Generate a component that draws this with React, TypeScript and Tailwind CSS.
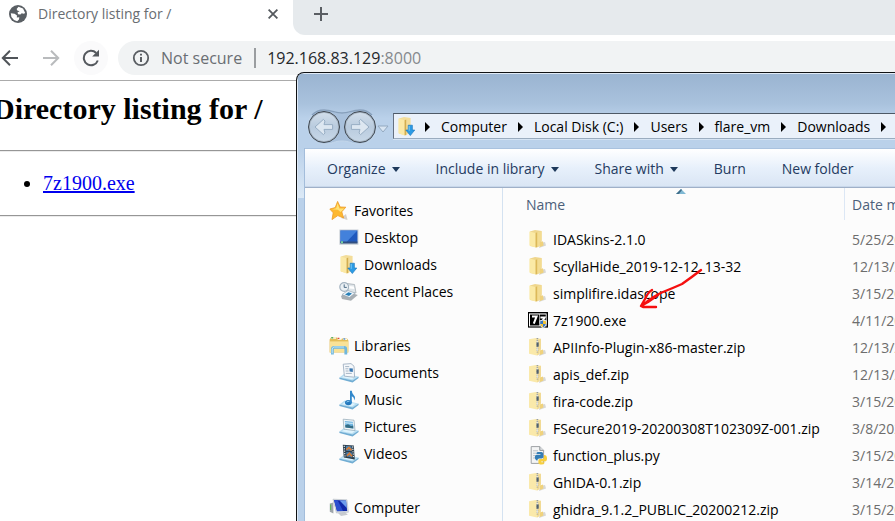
import React from "react";

type IconProps = { className?: string };

function Globe() {
  return (
    <svg viewBox="0 0 18 18" className="size-[18px] shrink-0" aria-hidden="true">
      <circle cx="9" cy="9" r="9" fill="#5a5f64" />
      <path d="M9.5 1.8 14 3.6 16.2 8 14.8 8.8 12.7 8.2 11.4 9.6 9 9.2 8.6 7.2 10.6 6.2 8.3 5.6 7.6 4Z" fill="#fff" />
      <path d="M1.8 8.2 5.6 8.8 8 10.4 7.8 12.4 10.3 12.2 10 14.4 8.2 16.2 5 15 2.4 12Z" fill="#fff" />
    </svg>
  );
}

function ArrowLeft({ className }: IconProps) {
  return (
    <svg viewBox="0 0 18 18" className={className} fill="none" stroke="currentColor" strokeWidth="2" aria-hidden="true">
      <path d="M17 9H2M9 1.8 1.8 9 9 16.2" />
    </svg>
  );
}

function Reload() {
  return (
    <svg viewBox="0 0 18 18" className="size-[18px]" fill="none" aria-hidden="true">
      <path d="M14.2 4A7.2 7.2 0 1 0 15.8 11.5" stroke="#55595e" strokeWidth="2" />
      <path d="M17 .8V7.6H10.2Z" fill="#55595e" />
    </svg>
  );
}

function Info() {
  return (
    <svg viewBox="0 0 18 18" className="size-[18px] shrink-0" fill="none" aria-hidden="true">
      <circle cx="9" cy="9" r="7.2" stroke="#5a5e63" strokeWidth="1.8" />
      <path d="M9 8v5M9 4.8v1.8" stroke="#5a5e63" strokeWidth="2" />
    </svg>
  );
}

function Folder() {
  return (
    <svg viewBox="0 0 20 20" className="size-5 shrink-0" aria-hidden="true">
      <path d="M11 18 18 15.5 17 12 12 13Z" fill="#c9c9c4" opacity=".7" />
      <path d="M2 1.4 7 0 13.6 1V14.6L9 17.6 2 16Z" fill="#efd68d" />
      <path d="M1.4 1.4 7.6 3V17.6L1.4 15.6Z" fill="#fbeaa6" />
      <path d="M7.6 3 9.4 2.2V17L7.6 17.6Z" fill="#dcb959" />
      <path d="M9.4 2.2 13.6 1.2V10.6L11.6 12V16.2L9.4 17Z" fill="#f3dc92" />
      <path d="M12 12.2 15 11.2 15.6 15.4 12 17Z" fill="#f0d27c" />
    </svg>
  );
}

function ZipFolder() {
  return (
    <svg viewBox="0 0 20 20" className="size-5 shrink-0" aria-hidden="true">
      <path d="M11 18 18 15.5 17 12 12 13Z" fill="#c9c9c4" opacity=".7" />
      <path d="M1 1.2 8 0 13 .8V14.6L9 17.4 1 15.8Z" fill="#fae9aa" />
      <path d="M10.4 1.4 13 .8V11.2L11.4 12.6V16.2L9 17.4Z" fill="#f1da95" />
      <path d="M12 12.4 15 11.4 15.4 15.6 12 17Z" fill="#f0d27c" />
      <path d="M9.4 0V14.4" stroke="#989da1" strokeWidth="1.6" strokeDasharray="1.2 .8" />
      <path d="M9.6 4.4V8.6" stroke="#50606f" strokeWidth="2.2" />
      <path d="M9.2 2.8V4.4M9.2 9.6V13" stroke="#e8eef3" strokeWidth="1" />
    </svg>
  );
}

function DownloadsFolder() {
  return (
    <svg viewBox="0 0 20 20" className="size-5 shrink-0" aria-hidden="true">
      <path d="M2 1.6 7 0 13.6 1V14.4L9 18.4 2 16.4Z" fill="#f3dd9a" />
      <path d="M1.4 1.4 7.6 3.2V18.6L1.4 16.2Z" fill="#fbe9a6" />
      <path d="M7.6 3.2 9.2 2.4V17.8L7.6 18.6Z" fill="#d3ae50" />
      <path d="M11.2 8.2h4.2v4.8h2.4L13.3 18.6 8.8 13h2.4Z" fill="#2c9be5" stroke="#1673bb" strokeWidth=".6" />
      <path d="M12.2 9V13.8" stroke="#7accf8" strokeWidth="1" />
    </svg>
  );
}

function Star() {
  return (
    <svg viewBox="0 0 20 20" className="size-5 shrink-0" aria-hidden="true">
      <path d="M12 17 18.6 19 17 13Z" fill="#d6d0c8" />
      <path d="M8.6.4 11.2 6 16.8 6.2 12.8 10.8 14.6 17 8.8 14.6 3 18.6 4.2 11.8.8 8 6.2 6.6Z" fill="#fdb830" stroke="#ee9c28" strokeWidth=".8" />
      <path d="M8.6 2.2 10.4 7.4 15.4 7.4 11.6 11 8.8 8.8 3 8.2 7.2 7.2Z" fill="#ffe377" />
    </svg>
  );
}

function Desktop() {
  return (
    <svg viewBox="0 0 20 20" className="size-5 shrink-0" aria-hidden="true">
      <path d="M.4 1.4h19v15.4H.4Z" fill="#c5ccd3" />
      <path d="M1.4 2.4h17v12.4h-17Z" fill="#2059bd" />
      <path d="M1.4 2.4h17L7 14.6H1.4Z" fill="#4f8fe5" opacity=".75" />
      <path d="M1.4 13.4h17v2h-17Z" fill="#304e80" />
      <path d="M2 13.2h2v2H2Z" fill="#75d49c" />
    </svg>
  );
}

function RecentPlaces() {
  return (
    <svg viewBox="0 0 20 20" className="size-5 shrink-0" aria-hidden="true">
      <path d="M8 1.5 15.5 2.5 17 11 9 10Z" fill="#dfe5e9" stroke="#a4adb4" strokeWidth=".8" />
      <path d="M9.5 4 14.8 4.6 15.4 7 10.4 6.5Z" fill="#fff" />
      <path d="M2 14 8 9.5 18.8 13 12 18.8 3 17Z" fill="#a8aeb3" />
      <path d="M3 12.5 9 8.5 16 11 10.5 15.5Z" fill="#eef5fa" stroke="#8fa1b0" strokeWidth=".6" />
      <path d="M6 12.5 9.5 10.2 13 11.5 10 14Z" fill="#277fb7" />
      <circle cx="5.2" cy="5" r="4.4" fill="#eaf0f4" stroke="#a3b3c0" strokeWidth="1.2" />
      <path d="M5.2 2.4v3h2.6" stroke="#4b6a85" fill="none" />
    </svg>
  );
}

function Libraries() {
  return (
    <svg viewBox="0 0 20 20" className="size-5 shrink-0" aria-hidden="true">
      <path d="M.6 3.4 2 1.6h6l1 1.6h3l1-.8h5l1.4 2V16.6H.6Z" fill="#e4bd57" />
      <path d="M1 5.4H19.2V16H1Z" fill="#f9e297" />
      <path d="M2 2.2h5M8.6 3.2h4M14 3.4h4" stroke="#fffce9" strokeWidth="1.2" />
      <path d="M2.2 1.8h2" stroke="#42a650" strokeWidth="1.3" />
      <path d="M8.6 2.4h1.8" stroke="#e04632" strokeWidth="1.3" />
      <path d="M14.4 3h1.8" stroke="#3c82d5" strokeWidth="1.3" />
      <path d="M3.4 18.4V13.2Q3.4 11.4 5.2 11.4H15Q16.8 11.4 16.8 13.2V18.4" fill="none" stroke="#70b7dd" strokeWidth="2.8" />
      <path d="M3.2 17.4V13Q3.6 11.2 5.2 11H15" fill="none" stroke="#c3e7f7" strokeWidth="1" />
    </svg>
  );
}

function Tray() {
  return (
    <>
      <path d="M.4 14.4 5.6 10.6 19.4 13.4 13.6 18Z" fill="#b8def2" />
      <path d="M.4 14.4 13.6 17.4 19.6 13.4V15L13.6 19.4.4 16Z" fill="#71add3" />
      <path d="M3 14.3 6.4 12 16.4 13.8 13 16.2Z" fill="#e0f4fd" />
    </>
  );
}

function Documents() {
  return (
    <svg viewBox="0 0 20 20" className="size-5 shrink-0" aria-hidden="true">
      <Tray />
      <path d="M4.2 1.2 12 .6 15 3.2 15.6 14.2 5.4 13.2Z" fill="#f5f8fb" stroke="#95a7ba" strokeWidth=".8" />
      <path d="M6.2 3.6h4M6.4 5.8h3M6.6 8h3M6.8 10.4h6" stroke="#a6b5c4" />
      <path d="M10.4 5.2 13.8 5.5V9L10.6 8.6Z" fill="#3876b1" />
    </svg>
  );
}

function Music() {
  return (
    <svg viewBox="0 0 20 20" className="size-5 shrink-0" aria-hidden="true">
      <Tray />
      <ellipse cx="9.4" cy="12.6" rx="3.4" ry="2.6" fill="#2278bd" />
      <path d="M11 12.8V.8h1.8Q12.8 3.6 15 5.4 17 7.4 15 10.4 15.4 7.2 12.8 6.2V12.8Z" fill="#3288cb" />
      <path d="M7.6 12.2Q9 10.8 10.4 11.4" stroke="#90cbf0" fill="none" />
    </svg>
  );
}

function Pictures() {
  return (
    <svg viewBox="0 0 20 20" className="size-5 shrink-0" aria-hidden="true">
      <Tray />
      <path d="M4.2 2.2 15 3.2 16 13.6 5 12.2Z" fill="#f2f6f8" stroke="#9bb0bd" strokeWidth=".8" />
      <path d="M5.8 4 13.8 4.8 14.4 11.4 6.4 10.4Z" fill="#70b5e2" />
      <path d="M6.2 8.2 9 7.2 12 9 14.2 8.4 14.4 11.4 6.4 10.4Z" fill="#356e86" />
      <path d="M6 5.8 13.8 6.4" stroke="#d9f0f8" />
    </svg>
  );
}

function Videos() {
  return (
    <svg viewBox="0 0 20 20" className="size-5 shrink-0" aria-hidden="true">
      <Tray />
      <path d="M3.8.8 14.8 1.6 15.8 15.4 4.8 13.6Z" fill="#2b3c49" />
      <path d="M6.8 1.8 12.4 2.2 13 7.2 7.2 6.8Z" fill="#487fae" />
      <path d="M7.2 8 13 8.6 13.2 13.4 7.6 12.6Z" fill="#487fae" />
      <path d="M7.4 5.8 10 3.6 12.6 6.4M8 11.8 10.4 9.4 13 12.4" stroke="#d27b39" strokeWidth="1.8" fill="none" />
      <path d="M5.2 1.8 6 13" stroke="#dee7ed" strokeWidth="1.2" strokeDasharray="1.2 1.2" />
      <path d="M13.6 2.4 14.6 14.4" stroke="#dee7ed" strokeWidth="1.2" strokeDasharray="1.2 1.2" />
    </svg>
  );
}

function ComputerIcon() {
  return (
    <svg viewBox="0 0 20 20" className="size-5 shrink-0" aria-hidden="true">
      <path d="M.8 5.6 4.4 4.4V15.6L.8 13.8Z" fill="#9fa6ab" />
      <path d="M1.6 6.6V12" stroke="#61b75a" strokeWidth="1.2" />
      <path d="M9 15 16 14 18.8 16.8 12 18Z" fill="#c8cbd0" />
      <path d="M4 1.2 18 1.8 19.4 14.2 7.4 15Z" fill="#dadfe4" stroke="#b4bac2" strokeWidth=".6" />
      <path d="M5 2 17 2.6 18.2 13 8 13.2Z" fill="#1129a8" />
      <path d="M10.6 2.4 17 2.6 17.8 10Z" fill="#6e9ded" />
      <path d="M5 2 8.6 2.2 14 13H8Z" fill="#2b50cf" />
    </svg>
  );
}

function SevenZip() {
  return (
    <svg viewBox="0 0 20 20" className="size-5 shrink-0" aria-hidden="true">
      <path d="M0 1h20v15.6H0Z" fill="#000" />
      <path d="M1 2.4H18.6V15.4H1Z" fill="#fff" />
      <path d="M2 3.4H11V14.4H2ZM11.6 3.4H17.8V14.4H11.6Z" fill="#000" />
      <path d="M4 5.4H8.6L5.8 12.6M12.4 6.6H16.6L13.6 11.6" stroke="#fff" strokeWidth="2" fill="none" />
      <path d="M15 8.4 19 9.6Q19 15.4 15 17.8 11.2 15.4 11.4 9.6Z" fill="#e7ecf1" />
      <path d="M15 9.4V13H12.2V10.2ZM15 13H17.8Q17 15.6 15 16.8Z" fill="#3876c2" />
      <path d="M15 9.4 18 10.2V13H15ZM12.2 13H15V16.8Q13 15.6 12.2 13Z" fill="#f0c337" />
    </svg>
  );
}

function PythonFile() {
  return (
    <svg viewBox="0 0 20 20" className="size-5 shrink-0" aria-hidden="true">
      <path d="M3.2.6H11.8L15.6 4.4V17.4H3.2Z" fill="#f4f5f5" stroke="#9da1a4" />
      <path d="M11.8.6V4.4H15.6" fill="#dfe2e4" stroke="#8f9497" />
      <path d="M5 4.8h5M5 7.2h3M5 9.6h2M5 12h2" stroke="#bfc4c8" />
      <path d="M9.8 6h3.6q1.8 0 1.8 1.8V11q0 1.4-1.6 1.4h-2.4q-1.8 0-1.8 2H8.6Q6.8 14 6.8 11.2 6.8 8.8 8.8 8.8h3.6V8H8.4Q8.2 6.2 9.8 6Z" fill="#347db5" />
      <path d="M16 9q3 0 3 3.4 0 3-2.2 3h-3.6v.8h3.2V17q-.2 1.6-3 1.6-3 0-3-1.8V14.4q0-1.4 1.8-1.4h2Q16 12.8 16 11Z" fill="#f8cf3d" />
    </svg>
  );
}

const navGroups = [
  {
    title: "Favorites",
    icon: Star,
    items: [
      { label: "Desktop", icon: Desktop },
      { label: "Downloads", icon: DownloadsFolder },
      { label: "Recent Places", icon: RecentPlaces },
    ],
  },
  {
    title: "Libraries",
    icon: Libraries,
    items: [
      { label: "Documents", icon: Documents },
      { label: "Music", icon: Music },
      { label: "Pictures", icon: Pictures },
      { label: "Videos", icon: Videos },
    ],
  },
  { title: "Computer", icon: ComputerIcon, items: [] },
];

const files = [
  { name: "IDASkins-2.1.0", date: "5/25/2020", icon: Folder },
  { name: "ScyllaHide_2019-12-12_13-32", date: "12/13/2019", icon: Folder },
  { name: "simplifire.idascope", date: "3/15/2020", icon: Folder },
  { name: "7z1900.exe", date: "4/11/2020", icon: SevenZip },
  { name: "APIInfo-Plugin-x86-master.zip", date: "12/13/2019", icon: ZipFolder },
  { name: "apis_def.zip", date: "12/13/2019", icon: ZipFolder },
  { name: "fira-code.zip", date: "3/15/2020", icon: ZipFolder },
  { name: "FSecure2019-20200308T102309Z-001.zip", date: "3/8/2020", icon: ZipFolder },
  { name: "function_plus.py", date: "3/15/2020", icon: PythonFile },
  { name: "GhIDA-0.1.zip", date: "3/14/2020", icon: ZipFolder },
  { name: "ghidra_9.1.2_PUBLIC_20200212.zip", date: "3/15/2020", icon: ZipFolder },
];

const crumbs = ["Computer", "Local Disk (C:)", "Users", "flare_vm", "Downloads"];

const commands = [
  { label: "Organize", menu: true },
  { label: "Include in library", menu: true },
  { label: "Share with", menu: true },
  { label: "Burn", menu: false },
  { label: "New folder", menu: false },
];

function CrumbArrow() {
  return (
    <svg viewBox="0 0 5 10" className="h-[10px] w-[5px] shrink-0" aria-hidden="true">
      <path d="M0 0 5 5 0 10Z" fill="#000" />
    </svg>
  );
}

function Browser() {
  return (
    <div className="flex h-full flex-col bg-white">
      <div className="flex h-[35px] shrink-0 bg-white">
        <div className="flex w-[293px] shrink-0 items-center pb-2 pl-[9px] pr-[10px]">
          <Globe />
          <span className="ml-[11px] flex-1 text-[14px] leading-5 text-[#696d72]">Directory listing for /</span>
          <button aria-label="Close tab" className="flex size-5 items-center justify-center text-[#55595e]">
            <svg viewBox="0 0 10 10" className="size-[10px]" stroke="currentColor" strokeWidth="1.8" aria-hidden="true">
              <path d="M.6.6 9.4 9.4M9.4.6.6 9.4" />
            </svg>
          </button>
        </div>
        <div className="flex flex-1 items-center rounded-bl-xl bg-[#e6eaed] pb-2 pl-5">
          <button aria-label="New tab" className="text-[#5a5e63]">
            <svg viewBox="0 0 16 16" className="size-4" stroke="currentColor" strokeWidth="2" aria-hidden="true">
              <path d="M8 1V15M1 8H15" />
            </svg>
          </button>
        </div>
      </div>
      <div className="flex h-[46px] shrink-0 items-center border-b border-[#ababab]">
        <button aria-label="Back" className="ml-px text-[#505459]">
          <ArrowLeft className="size-[18px]" />
        </button>
        <button aria-label="Forward" className="ml-[23px] text-[#b9bbbd]">
          <ArrowLeft className="size-[18px] rotate-180" />
        </button>
        <button aria-label="Reload" className="ml-[14px] flex size-[34px] items-center justify-center rounded-full bg-[#fafafb]">
          <Reload />
        </button>
        <div className="ml-[10px] flex h-[34px] flex-1 items-center rounded-l-full bg-[#f1f3f4] pl-[14px]">
          <Info />
          <span className="ml-[11px] shrink-0 text-[16px] leading-6 text-[#6a6e73]">Not secure</span>
          <span className="ml-3 h-5 w-0.5 shrink-0 bg-[#9a9da0]" />
          <span className="ml-[11px] text-[16px] leading-6 text-[#25282b]">
            192.168.83.129<span className="text-[#85898d]">:8000</span>
          </span>
        </div>
      </div>
      <main className="-ml-[7px] font-['Liberation_Serif',serif] text-black">
        <h1 className="mt-[11px] text-[30px] font-bold leading-[34px]">Directory listing for /</h1>
        <hr className="mt-6 h-0.5 border-b border-t border-b-[#ececec] border-t-[#969696]" />
        <ul className="my-5 list-disc pl-[50px] text-[20px] leading-[23px]">
          <li>
            <a href="#7z1900.exe" className="text-[#0000ee] underline">7z1900.exe</a>
          </li>
        </ul>
        <hr className="h-0.5 border-b border-t border-b-[#ececec] border-t-[#969696]" />
      </main>
    </div>
  );
}

function NavCircles() {
  return (
    <div className="relative flex h-9 w-[70px] shrink-0 items-center justify-between px-px">
      <svg viewBox="0 0 70 36" className="absolute inset-0 h-9 w-[70px]" aria-hidden="true">
        <path d="M17 1C26 1 27 4 35 4S44 1 53 1C64 1 69 9 69 18S63 35 53 35C44 35 43 32 35 32S26 35 17 35C7 35 1 27 1 18S6 1 17 1Z" fill="#a9c1dc" stroke="#c3d6ea" />
        <path d="M5 6Q10 1 17 1C26 1 27 4 35 4S44 1 53 1Q60 1 65 6" fill="none" stroke="#869fbb" strokeWidth="1.4" />
      </svg>
      {["Back", "Forward"].map((name) => (
        <button
          key={name}
          aria-label={name + " folder"}
          className="relative flex size-8 items-center justify-center rounded-full border border-[#3d454e] bg-linear-to-b from-[#d3dfeb] via-[#b9cbde] to-[#c8d8e8] shadow-[inset_0_0_0_1px_#a3b1bf]"
        >
          <svg viewBox="0 0 20 18" className={name === "Back" ? "h-[18px] w-5" : "h-[18px] w-5 rotate-180"} aria-hidden="true">
            <path d="M1 9 9.4 1.4 11 3 10 6.6H18.6V11.4H10L11 15 9.4 16.6Z" fill="#dde7f1" stroke="#98aec4" strokeLinejoin="round" />
          </svg>
        </button>
      ))}
    </div>
  );
}

function Explorer() {
  return (
    <section
      aria-label="Downloads"
      className="absolute bottom-0 left-[296px] right-0 top-[72px] flex flex-col overflow-hidden rounded-tl-lg border-l border-t border-[#101214] bg-[#bad1ea] pl-px pt-px shadow-[inset_1px_1px_0_#dfeaf6]"
    >
      <div className="flex h-[74px] shrink-0 items-end bg-linear-to-b from-[#9ab4d1] via-[#a9c2dd] via-40% to-[#bad1ea] to-60% pb-[3px] pl-[9px]">
        <NavCircles />
        <button aria-label="Recent pages" className="mb-3 shrink-0">
          <svg viewBox="0 0 12 8" className="h-2 w-3" aria-hidden="true">
            <path d="M1 1H11L6 7Z" fill="#d8e5f2" stroke="#93a9c0" />
          </svg>
        </button>
        <nav aria-label="Address" className="mb-1.5 ml-1 flex h-[26px] flex-1 items-center border border-r-0 border-b-[#9aacbf] border-l-[#657080] border-t-[#4d5966] bg-[#eaf1fa] pl-[3px] pt-px shadow-[0_1px_0_#d5e4f4]">
          <DownloadsFolder />
          <span className="ml-2 flex shrink-0 items-center gap-[11px]">
            <CrumbArrow />
            {crumbs.map((crumb) => (
              <React.Fragment key={crumb}>
                <button className="whitespace-nowrap text-[14px] leading-5 text-black">{crumb}</button>
                <CrumbArrow />
              </React.Fragment>
            ))}
          </span>
        </nav>
      </div>
      <div className="flex min-h-0 flex-1">
        <div className="w-1.5 shrink-0">
          <div className="h-[50px] bg-linear-to-b from-[#bad1ea] to-[#dce9f6]" />
        </div>
        <div className="flex min-w-0 flex-1 flex-col border-l border-[#a3bddb] bg-[#fcfcfc]">
          <div className="flex h-10 shrink-0 items-center gap-9 border-b border-t border-b-[#9fb0c8] border-t-[#a9c2df] bg-linear-to-b from-white via-[#e7f0fb] via-50% to-[#d9e5f4] pl-[22px] pt-0.5 shadow-[inset_0_-1px_0_#c8d7ea]">
            {commands.map((command) => (
              <button key={command.label} className="flex shrink-0 items-center gap-1.5 whitespace-nowrap text-[14px] leading-5 text-[#243b61]">
                {command.label}
                {command.menu && (
                  <svg viewBox="0 0 8 5" className="h-[5px] w-2" aria-hidden="true">
                    <path d="M0 0H8L4 5Z" fill="#1e395b" />
                  </svg>
                )}
              </button>
            ))}
          </div>
          <div className="flex min-h-0 flex-1">
            <aside className="flex w-[198px] shrink-0 flex-col gap-[27px] border-r border-[#d4e2f1] pt-[9px]">
              {navGroups.map((group) => (
                <div key={group.title}>
                  <div className="flex h-[27px] items-center gap-[5px] pl-6 text-[14px] leading-5 text-black">
                    <group.icon />
                    {group.title}
                  </div>
                  {group.items.map((item) => (
                    <div key={item.label} className="flex h-[27px] items-center gap-[5px] pl-[34px] text-[14px] leading-5 text-black">
                      <item.icon />
                      {item.label}
                    </div>
                  ))}
                </div>
              ))}
            </aside>
            <div className="relative min-w-0 flex-1 overflow-hidden">
              <svg viewBox="0 0 10 5" className="absolute left-[173px] top-px h-[5px] w-[10px]" aria-hidden="true">
                <path d="M0 5 5 0 10 5Z" fill="#80b9d4" />
                <path d="M0 5 5 0 6 1 3 5Z" fill="#406e89" />
              </svg>
              <table className="w-[480px] table-fixed border-collapse text-left text-[14px] leading-5">
                <thead>
                  <tr className="h-[38px] align-top text-[#4c607a]">
                    <th scope="col" className="w-[341px] p-0 pl-[23px] pt-[7px] font-normal">
                      Name
                    </th>
                    <th scope="col" className="p-0 font-normal">
                      <div className="h-8 border-l border-[#dce7f5] pl-[7px] pt-[7px]">Date modified</div>
                    </th>
                  </tr>
                </thead>
                <tbody>
                  {files.map((file) => (
                    <tr key={file.name} className="h-[27px]">
                      <td className="p-0 pl-[25px]">
                        <span className="flex items-center gap-[5px] whitespace-nowrap text-black">
                          <file.icon />
                          {file.name}
                        </span>
                      </td>
                      <td className="p-0 pl-2 text-[#6d6d6d]">{file.date}</td>
                    </tr>
                  ))}
                </tbody>
              </table>
              <svg viewBox="0 0 64 42" className="absolute left-[136px] top-[80px] h-[42px] w-16" fill="none" stroke="#f50f0f" strokeWidth="2.4" strokeLinecap="round" strokeLinejoin="round" aria-hidden="true">
                <path d="M62 2Q53 9 43 16Q34 20 24 24Q14 28 4 37M13 22Q9 24 6 31L2 38 4 39H17M2 38 9 34 19 27" />
              </svg>
            </div>
          </div>
        </div>
      </div>
    </section>
  );
}

export default function App() {
  return (
    <div className="relative h-screen overflow-hidden bg-white font-['Open_Sans','Noto_Sans',sans-serif]">
      <Browser />
      <Explorer />
    </div>
  );
}
